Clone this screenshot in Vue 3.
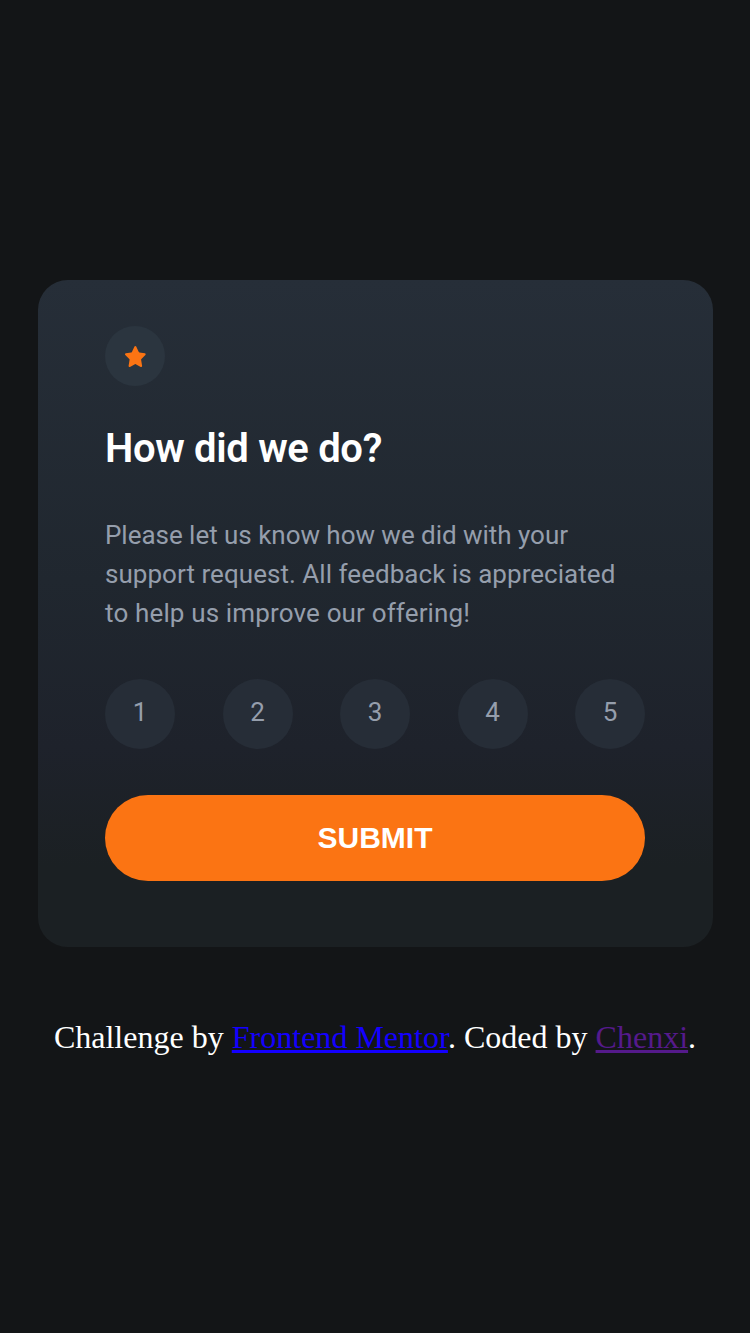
<script setup>
const ratings = [1, 2, 3, 4, 5]
const lines = [
  'Please let us know how we did with your',
  'support request. All feedback is appreciated',
  'to help us improve our offering!'
]
</script>

<template>
  <main class="page">
    <section class="card">
      <div class="badge">
        <svg width="21" height="21" viewBox="0 0 17 16" preserveAspectRatio="none" aria-hidden="true">
          <path
            d="m9.067.43 1.99 4.031c.112.228.33.386.58.422l4.45.647a.772.772 0 0 1 .427 1.316l-3.22 3.138a.773.773 0 0 0-.222.683l.76 4.431a.772.772 0 0 1-1.12.813l-3.98-2.092a.773.773 0 0 0-.718 0l-3.98 2.092a.772.772 0 0 1-1.119-.813l.76-4.431a.77.77 0 0 0-.222-.683L.233 6.846A.772.772 0 0 1 .661 5.53l4.449-.647a.772.772 0 0 0 .58-.422L7.68.43a.774.774 0 0 1 1.387 0Z"
            fill="#fb7413"
          />
        </svg>
      </div>
      <h1 class="title">How did we do?</h1>
      <p class="copy">
        <span v-for="(line, i) in lines" :key="i" class="line" :class="'line-' + i">{{ line }}</span>
      </p>
      <div class="ratings">
        <button v-for="n in ratings" :key="n" class="rating" type="button">{{ n }}</button>
      </div>
      <button class="submit" type="button">SUBMIT</button>
    </section>
    <footer class="credit">
      Challenge by <a class="mentor" href="#">Frontend Mentor</a>. Coded by <a class="author" href="#">Chenxi</a>.
    </footer>
  </main>
</template>

<style>
body {
  background: #131517;
}
</style>

<style scoped>
.page {
  box-sizing: border-box;
  height: 1333px;
  padding-top: 280px;
  display: flex;
  flex-direction: column;
  align-items: center;
  background: #131517;
}
.card {
  box-sizing: border-box;
  width: 675px;
  height: 667px;
  margin-left: 1px;
  padding: 46px 68px 66px 67px;
  border-radius: 30px;
  background: linear-gradient(#262e38, #20272f 45%, #1e222b 70%, #1b2023 88%, #1b2023);
  font-family: Roboto, sans-serif;
  display: flex;
  flex-direction: column;
}
.badge {
  width: 60px;
  height: 60px;
  border-radius: 50%;
  background: #2b353f;
  display: flex;
  align-items: center;
  justify-content: center;
}
.title {
  margin: 34px 0 0;
  height: 56px;
  line-height: 58px;
  font-size: 40px;
  font-weight: 600;
  letter-spacing: -0.33px;
  color: #fff;
  white-space: nowrap;
}
.copy {
  margin: 40px 0 0;
  font-size: 26px;
  line-height: 39px;
  color: #959eac;
}
.line {
  display: block;
  width: max-content;
  white-space: nowrap;
}
.line-0 {
  letter-spacing: -0.03px;
}
.line-1 {
  letter-spacing: 0.04px;
}
.line-2 {
  letter-spacing: 0.15px;
}
.ratings {
  margin-top: 46px;
  display: flex;
  justify-content: space-between;
}
.rating {
  width: 70px;
  height: 70px;
  padding: 0 0 5px;
  border: 0;
  border-radius: 50%;
  background: #262d37;
  color: #959eac;
  font: 400 26px Roboto, sans-serif;
}
.submit {
  height: 86px;
  margin-top: 46px;
  padding: 0;
  border: 0;
  border-radius: 43px;
  background: #fb7413;
  color: #fff;
  font: 700 30px "Liberation Sans", Arial, sans-serif;
}
.credit {
  margin-top: 72px;
  font: 32px/37px "Liberation Serif", "Times New Roman", serif;
  letter-spacing: 0.01px;
  color: #fff;
  white-space: nowrap;
}
.credit a {
  text-decoration-thickness: 3px;
  text-decoration-skip-ink: none;
}
.mentor {
  color: #1400ff;
}
.author {
  color: #551a8b;
}
</style>
